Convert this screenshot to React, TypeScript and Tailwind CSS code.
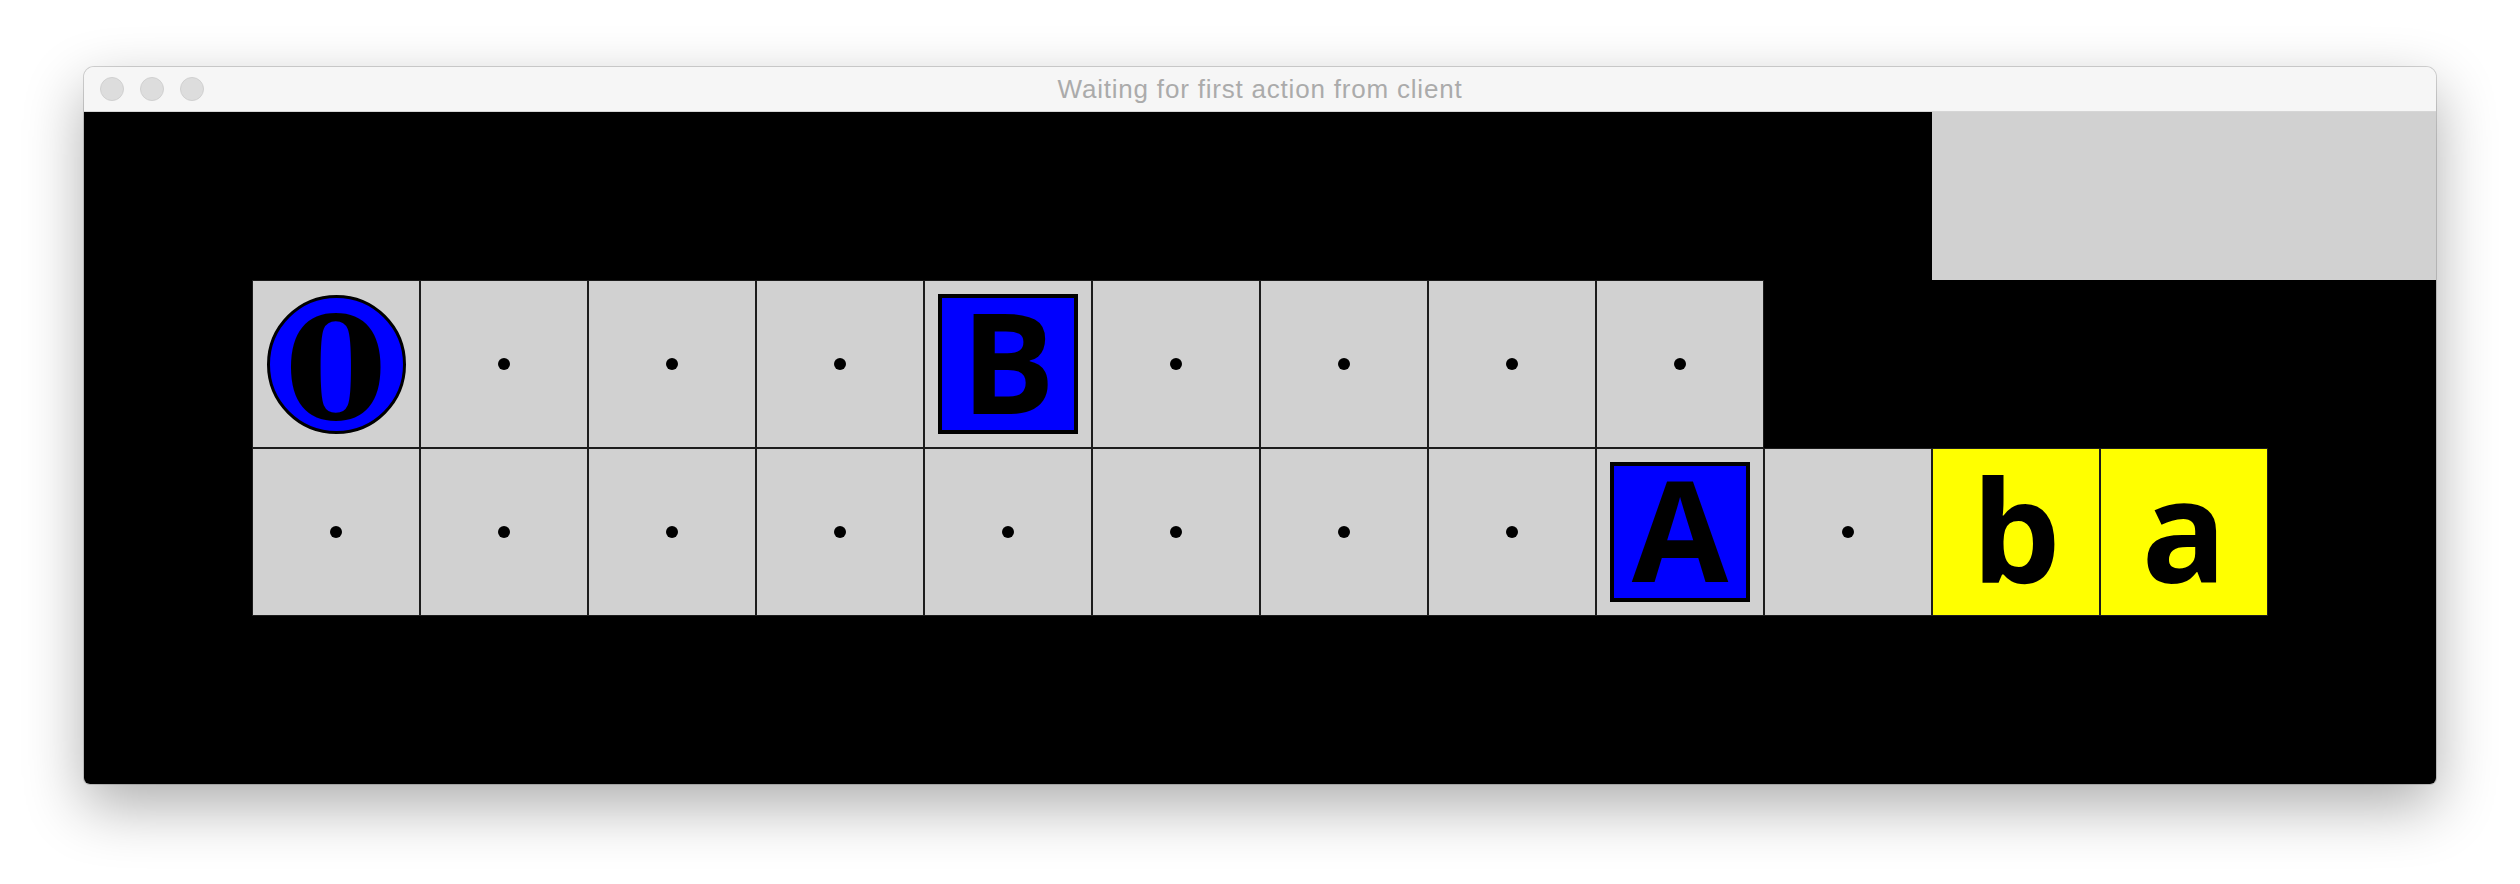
type Token =
  | { kind: 'dot' }
  | { kind: 'agent'; label: string }
  | { kind: 'box'; label: string }
  | { kind: 'goal'; label: string };

const dot: Token = { kind: 'dot' };

const rowOne: Token[] = [
  { kind: 'agent', label: '0' },
  dot,
  dot,
  dot,
  { kind: 'box', label: 'B' },
  dot,
  dot,
  dot,
  dot,
];

const rowTwo: Token[] = [
  dot,
  dot,
  dot,
  dot,
  dot,
  dot,
  dot,
  dot,
  { kind: 'box', label: 'A' },
  dot,
  { kind: 'goal', label: 'b' },
  { kind: 'goal', label: 'a' },
];

const Blank = () => <div />;

const Cell = ({ token }: { token: Token }) => {
  const bg = token.kind === 'goal' ? 'bg-[#ffff00]' : 'bg-[#d1d1d1]';

  return (
    <div className={`flex items-center justify-center border-[1.5px] border-[#1c1c1c] ${bg}`}>
      {token.kind === 'dot' && <span className="size-3 rounded-full bg-black" />}

      {token.kind === 'agent' && (
        <div className="flex size-[139px] items-center justify-center rounded-full border-[3px] border-black bg-[#0000ff]">
          <span className="translate-y-[5px] scale-x-[1.04] font-['DejaVu_Serif',serif] text-[143px] font-bold leading-none text-black">
            {token.label}
          </span>
        </div>
      )}

      {token.kind === 'box' && (
        <div className="flex size-[140px] items-center justify-center border-4 border-black bg-[#0000ff]">
          <span className="-translate-y-1 font-['Open_Sans',sans-serif] text-[140px] font-bold leading-none text-black">
            {token.label}
          </span>
        </div>
      )}

      {token.kind === 'goal' && (
        <span className="-translate-y-1 font-['Open_Sans',sans-serif] text-[141px] font-bold leading-none text-black">
          {token.label}
        </span>
      )}
    </div>
  );
};

const TitleBar = () => (
  <div className="grid h-[45px] grid-cols-[1fr_auto_1fr] items-center border-b border-[#d6d6d6] bg-[#f6f6f6]">
    <div className="flex gap-4 pl-4">
      <span className="size-6 rounded-full border border-[#d0d0d0] bg-[#dddddd]" />
      <span className="size-6 rounded-full border border-[#d0d0d0] bg-[#dddddd]" />
      <span className="size-6 rounded-full border border-[#d0d0d0] bg-[#dddddd]" />
    </div>
    <span className="font-['Liberation_Sans',Arial,sans-serif] text-[26px] tracking-[0.8px] text-[#ababab]">
      Waiting for first action from client
    </span>
    <div />
  </div>
);

export default function App() {
  return (
    <div className="h-[884px] w-[2520px] overflow-hidden bg-white pl-[84px] pt-[67px]">
      <div className="w-[2352px] overflow-hidden rounded-t-[10px] rounded-b-[6px] shadow-[0_0_0_1px_rgba(0,0,0,0.16),0_22px_60px_rgba(0,0,0,0.32)]">
        <TitleBar />

        <div className="grid grid-cols-[repeat(14,168px)] grid-rows-[repeat(4,168px)] bg-black">
          {/* top row: empty board area and the grey panel on the right */}
          {Array.from({ length: 11 }).map((_, i) => (
            <Blank key={`t${i}`} />
          ))}
          <div className="col-span-3 bg-[#d1d1d1]" />

          <Blank />
          {rowOne.map((token, i) => (
            <Cell key={`a${i}`} token={token} />
          ))}
          {Array.from({ length: 4 }).map((_, i) => (
            <Blank key={`b${i}`} />
          ))}

          <Blank />
          {rowTwo.map((token, i) => (
            <Cell key={`c${i}`} token={token} />
          ))}
          <Blank />
        </div>
      </div>
    </div>
  );
}
